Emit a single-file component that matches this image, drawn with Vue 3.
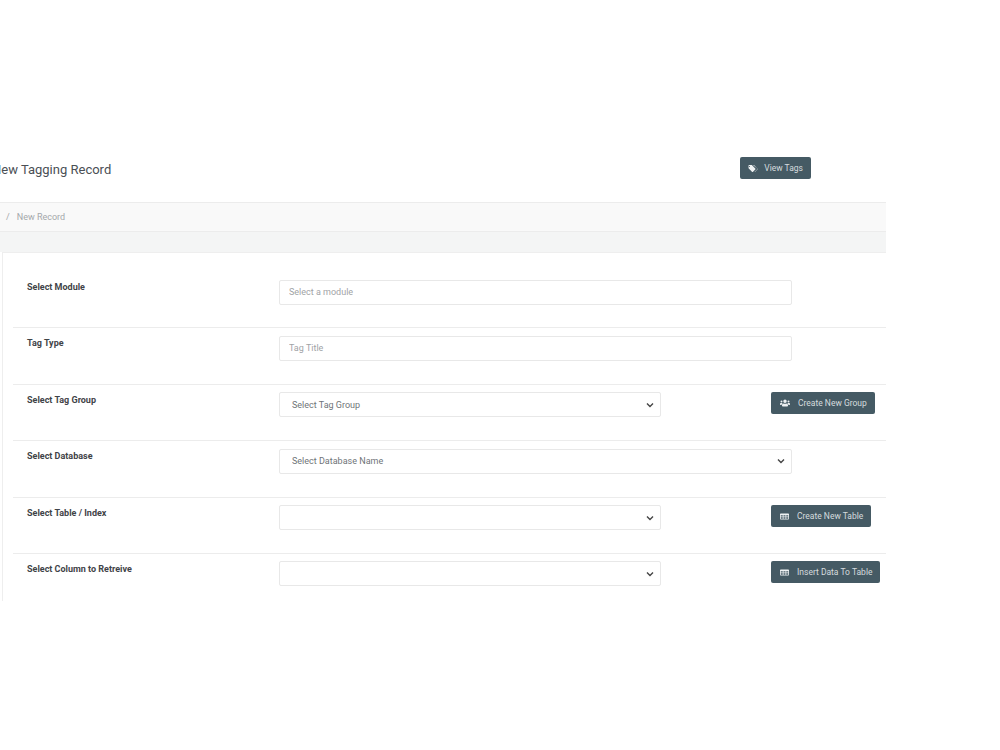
<template>
  <div class="page">
    <div class="page-header">
      <h1 class="page-title">New Tagging Record</h1>
      <button class="btn view-tags">
        <svg class="icon icon-tags" viewBox="40 64 600 416"><path :d="icons.tags" /></svg>
        View Tags
      </button>
    </div>

    <div class="breadcrumb">
      <span class="crumb-sep">/</span>
      <span>New Record</span>
    </div>

    <div class="band"></div>

    <div class="card">
      <div v-for="row in rows" :key="row.label" class="form-row">
        <label class="form-label">{{ row.label }}</label>

        <div class="form-control" :class="{ narrow: row.button }">
          <input v-if="row.type === 'input'" type="text" :placeholder="row.placeholder" />
          <select v-else>
            <option v-if="row.placeholder">{{ row.placeholder }}</option>
            <option v-else></option>
          </select>
        </div>

        <button v-if="row.button" class="btn row-btn">
          <svg v-if="row.button.icon === 'users'" class="icon icon-users" viewBox="0 32 640 448"><path :d="icons.users" /></svg>
          <svg v-else class="icon icon-table" viewBox="32 64 576 384"><path :d="icons.table" /></svg>
          {{ row.button.text }}
        </button>
      </div>
    </div>
  </div>
</template>

<script setup>
const icons = {
  tags: 'M40 64h210c13 0 25 5 34 14l190 190c19 19 19 49 0 68L344 466c-19 19-49 19-68 0L86 276c-9-9-14-21-14-34V96c0-18 14-32 32-32zm90 56a32 32 0 1 0 0 64 32 32 0 0 0 0-64zM340 64h40c13 0 25 5 34 14l190 190c19 19 19 49 0 68L476 466c-12 12-28 16-44 12l150-150c19-19 19-49 0-68z',
  users: 'M96 224a64 64 0 1 0 0-128 64 64 0 0 0 0 128zm448 0a64 64 0 1 0 0-128 64 64 0 0 0 0 128zm32 32h-64c-18 0-34 7-45 19 40 22 69 62 75 109h66c18 0 32-14 32-32v-32c0-35-29-64-64-64zm-256 0a112 112 0 1 0 0-224 112 112 0 0 0 0 224zm77 32h-8c-21 10-44 16-69 16s-48-6-69-16h-8c-64 0-115 52-115 115v29c0 26 22 48 48 48h288c26 0 48-22 48-48v-29c0-63-51-115-115-115zm-224-13c-11-12-27-19-45-19H64c-35 0-64 29-64 64v32c0 18 14 32 32 32h66c6-47 35-87 75-109z',
  table: 'M80 64h480c26 0 48 22 48 48v288c0 26-22 48-48 48H80c-26 0-48-22-48-48V112c0-26 22-48 48-48zm0 112v64h128v-64zm176 0v64h128v-64zm176 0v64h128v-64zM80 272v64h128v-64zm176 0v64h128v-64zm176 0v64h128v-64zM80 368v48h128v-48zm176 0v48h128v-48zm176 0v48h128v-48z'
};

const rows = [
  { label: 'Select Module', type: 'input', placeholder: 'Select a module' },
  { label: 'Tag Type', type: 'input', placeholder: 'Tag Title' },
  {
    label: 'Select Tag Group',
    type: 'select',
    placeholder: 'Select Tag Group',
    button: { icon: 'users', text: 'Create New Group' }
  },
  { label: 'Select Database', type: 'select', placeholder: 'Select Database Name' },
  {
    label: 'Select Table / Index',
    type: 'select',
    button: { icon: 'table', text: 'Create New Table' }
  },
  {
    label: 'Select Column to Retreive',
    type: 'select',
    button: { icon: 'table', text: 'Insert Data To Table' }
  }
];
</script>

<style scoped>
.page {
  width: 886px;
  padding-top: 150px;
  font-family: Roboto, "Liberation Sans", sans-serif;
}

.page-header {
  display: flex;
  justify-content: space-between;
  align-items: flex-start;
  height: 53px;
  border-bottom: 1px solid #ececec;
  box-sizing: border-box;
  padding: 7px 75px 0 0;
}

.page-title {
  margin: 5px 0 0 -8px;
  font-size: 13px;
  font-weight: 400;
  line-height: 16px;
  color: #4a4f55;
}

.btn {
  display: flex;
  align-items: center;
  height: 22px;
  border: 0;
  border-radius: 2px;
  padding: 0 8px 0 9px;
  background: #455a64;
  color: #d5dcdf;
  font-family: inherit;
  font-size: 8.5px;
  white-space: nowrap;
}

.view-tags {
  padding: 0 8px;
}

.icon {
  flex: none;
  fill: #eef1f2;
}

.icon-tags {
  width: 10px;
  height: 7px;
  margin-right: 6px;
}

.icon-users {
  width: 10px;
  height: 8px;
  margin-right: 8px;
}

.icon-table {
  width: 9px;
  height: 7px;
  margin-right: 8px;
}

.breadcrumb {
  display: flex;
  align-items: center;
  gap: 7px;
  height: 29px;
  padding-left: 6px;
  box-sizing: border-box;
  background: #f9f9f9;
  border-bottom: 1px solid #ececec;
  font-size: 9px;
  color: #a4a8ab;
}

.band {
  height: 20px;
  background: #f4f5f5;
}

.card {
  height: 349px;
  margin-left: 2px;
  padding: 19px 0 0 10px;
  box-sizing: border-box;
  overflow: hidden;
  background: #fff;
  border-top: 1px solid #eeeeee;
  border-left: 1px solid #eeeeee;
}

.form-row {
  display: flex;
  align-items: flex-start;
  box-sizing: border-box;
  height: 56.4px;
  padding: 7.5px 0 0 14px;
  border-bottom: 1px solid #ececec;
}

.form-row:last-child {
  border-bottom: 0;
}

.form-label {
  width: 252px;
  flex: none;
  padding-top: 1.5px;
  font-size: 9px;
  font-weight: 700;
  line-height: 12px;
  color: #3f4347;
}

.form-control {
  width: 513px;
  flex: none;
}

.form-control.narrow {
  width: 382px;
  margin-right: 110px;
}

.form-control input,
.form-control select {
  display: block;
  width: 100%;
  height: 25px;
  box-sizing: border-box;
  border: 1px solid #e8e8e8;
  border-radius: 2px;
  background: #fff;
  font-family: inherit;
  font-size: 9px;
  color: #6f7478;
  outline: none;
}

.form-control input {
  padding: 0 9px;
}

.form-control select {
  appearance: none;
  padding: 0 24px 0 12px;
  background: #fff url("data:image/svg+xml,%3Csvg xmlns='http://www.w3.org/2000/svg' viewBox='0 0 8 6'%3E%3Cpath d='M1 1.5l3 3 3-3' fill='none' stroke='%23444' stroke-width='1.4'/%3E%3C/svg%3E") no-repeat right 6px center / 8px 6px;
}

.form-control input::placeholder {
  color: #9fa3a6;
}
</style>
